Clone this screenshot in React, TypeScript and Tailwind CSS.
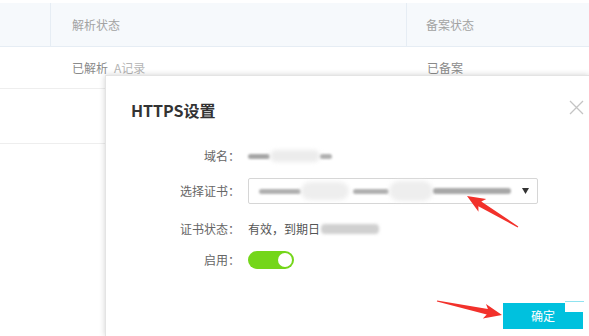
import React from "react";

const CJK = { fontFamily: '"Noto Sans CJK SC", "Noto Sans", sans-serif' };

function Arrow({ x1, y1, x2, y2 }: { x1: number; y1: number; x2: number; y2: number }) {
  const dx = x2 - x1;
  const dy = y2 - y1;
  const L = Math.sqrt(dx * dx + dy * dy);
  const a = (Math.atan2(dy, dx) * 180) / Math.PI;
  const pts = `0,-0.6 ${L - 15},-2.8 ${L - 18},-7.5 ${L},0 ${L - 18},7.5 ${L - 15},2.8 0,0.6`;
  return <polygon points={pts} fill="#f2312b" transform={`translate(${x1} ${y1}) rotate(${a})`} />;
}

export default function App() {
  return (
    <div className="relative w-[589px] h-[336px] overflow-hidden bg-white" style={CJK}>
      {/* table */}
      <div className="pt-[3px]">
        <div className="flex h-[44px] bg-[#f6f9fc] border-b border-[#e6edf4] text-[12px] text-[#a3a3a3]">
          <div className="w-[51px] border-r border-[#e6edf4]" />
          <div className="w-[356px] border-r border-[#e6edf4] pl-[21px] flex items-center">解析状态</div>
          <div className="flex-1 pl-[19px] flex items-center">备案状态</div>
        </div>
        <div className="flex h-[42px] border-b border-[#eeeeee] text-[12px]">
          <div className="w-[51px]" />
          <div className="w-[356px] pl-[21px] flex items-center gap-[6px]">
            <span className="text-[#8a8a8a]">已解析</span>
            <span className="text-[#b5b5b5]">A记录</span>
          </div>
          <div className="flex-1 pl-[20px] flex items-center text-[#8a8a8a]">已备案</div>
        </div>
        <div className="h-[55px] border-b border-[#eeeeee]" />
      </div>

      {/* dialog */}
      <div className="absolute left-[105px] top-[75px] right-0 bottom-0 bg-white shadow-[0_0_6px_rgba(0,0,0,0.18)] border-l border-t border-[#e4e4e4]">
        <div className="pt-[24px] pl-[25px] h-[44px] text-[16px] leading-[20px] font-semibold text-[#333]">HTTPS设置</div>
        <svg className="absolute left-[463px] top-[24px]" width="15" height="15" viewBox="0 0 15 15">
          <path d="M1 1 L14 14 M14 1 L1 14" stroke="#c4c4c4" strokeWidth="1.3" />
        </svg>

        <div className="text-[12px]">
          <div className="flex items-center h-[24px] mt-[24px]">
            <div className="w-[134px] text-right text-[#666]">域名：</div>
            <div className="ml-[8px] flex items-center">
              <span className="w-[22px] h-[5px] bg-[#a5a5a5] blur-[1px] rounded" />
              <span className="w-[50px] h-[12px] bg-[#ececec] blur-[2px] rounded-full" />
              <span className="w-[12px] h-[5px] bg-[#b0b0b0] blur-[1px] rounded" />
            </div>
          </div>

          <div className="flex items-center h-[26px] mt-[10px]">
            <div className="w-[134px] text-right text-[#666]">选择证书：</div>
            <div className="ml-[8px] w-[290px] h-[26px] border border-[#d6d6d6] rounded-[2px] flex items-center pl-[10px] pr-[8px]">
              <span className="w-[42px] h-[5px] bg-[#b0b0b0] blur-[1px] rounded" />
              <span className="w-[48px] h-[18px] bg-[#eeeeee] blur-[2px] rounded-full" />
              <span className="ml-[4px] w-[36px] h-[5px] bg-[#b0b0b0] blur-[1px] rounded" />
              <span className="w-[44px] h-[20px] bg-[#eeeeee] blur-[2px] rounded-full" />
              <span className="w-[78px] h-[6px] bg-[#a8a8a8] blur-[1px] rounded" />
              <svg className="ml-auto" width="7" height="6" viewBox="0 0 7 6">
                <path d="M0 0 L7 0 L3.5 6 Z" fill="#333" />
              </svg>
            </div>
          </div>

          <div className="flex items-center h-[24px] mt-[13px]">
            <div className="w-[134px] text-right text-[#666]">证书状态：</div>
            <div className="ml-[8px] flex items-center text-[#555]">
              <span>有效，到期日</span>
              <span className="ml-[1px] w-[58px] h-[10px] bg-[#d0d0d0] blur-[1.5px] rounded" />
            </div>
          </div>

          <div className="flex items-center h-[24px] mt-[7px]">
            <div className="w-[134px] text-right text-[#666]">启用：</div>
            <div className="ml-[8px] w-[46px] h-[18px] rounded-full bg-[#74d61a] flex items-center justify-end pr-[2px]">
              <span className="w-[14px] h-[14px] rounded-full bg-white" />
            </div>
          </div>
        </div>

        <div className="flex justify-end pr-[6px] mt-[31px]">
          <div className="w-[80px] h-[26px] bg-[#00c1de] text-white text-[12px] flex items-center justify-center">确定</div>
        </div>
        <div className="absolute left-[459px] top-[225px] w-[19px] h-[11px] bg-white border-t border-[#8fe3f0]" />
      </div>

      <svg className="absolute left-0 top-0 pointer-events-none" width="589" height="336">
        <Arrow x1={518} y1={227} x2={467} y2={196} />
        <Arrow x1={437} y1={301} x2={502} y2={315} />
      </svg>
    </div>
  );
}
